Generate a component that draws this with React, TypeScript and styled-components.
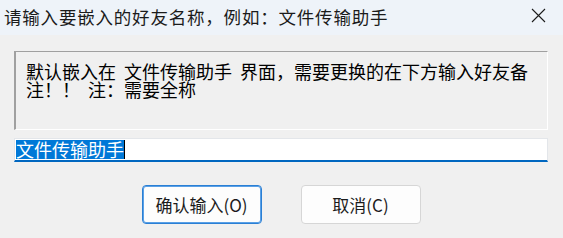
import styled, { createGlobalStyle } from "styled-components";

const GlobalStyle = createGlobalStyle`
  html, body {
    margin: 0;
    padding: 0;
    background: #f0f0f0;
  }
  body {
    font-family: "Noto Sans CJK SC", "Noto Sans", sans-serif;
  }
`;

const Window = styled.div`
  width: 563px;
  height: 238px;
  display: flex;
  flex-direction: column;
  background: #f0f0f0;
  overflow: hidden;
`;

const TitleBar = styled.div`
  height: 35px;
  flex: 0 0 35px;
  display: flex;
  align-items: center;
  justify-content: space-between;
  padding: 0 17px 0 4px;
  background: #eef3f9;
  color: #1b1b1b;
  font-size: 17.5px;
`;

const Title = styled.span`
  line-height: 1;
  padding-bottom: 2px;
  white-space: nowrap;
  letter-spacing: 0.8px;
`;

const CloseButton = styled.span`
  display: flex;
  align-items: center;
  width: 15px;
  height: 15px;
  margin-bottom: 4px;
`;

const Body = styled.div`
  display: flex;
  flex-direction: column;
  padding: 16px 15px 0 14px;
`;

const Prompt = styled.div`
  height: 79px;
  box-sizing: border-box;
  padding: 10px 12px 0 10px;
  border-top: 1px solid #a0a0a0;
  border-left: 2px solid #a0a0a0;
  border-right: 1px solid #ffffff;
  border-bottom: 1px solid #ffffff;
  font-size: 18px;
  line-height: 18px;
  word-spacing: 4px;
  color: #000;
`;

const Edit = styled.div`
  margin-top: 8px;
  height: 24px;
  box-sizing: border-box;
  display: flex;
  align-items: center;
  padding-left: 1px;
  background: #fff;
  border: 1px solid #e3e6ea;
  border-bottom: 2px solid #0067c0;
  font-size: 18px;
  line-height: 19px;
`;

const Selected = styled.span`
  background: #0078d7;
  color: #fff;
`;

const Caret = styled.span`
  display: inline-block;
  width: 1px;
  height: 19px;
  background: #000;
`;

const ButtonRow = styled.div`
  margin-top: 23px;
  display: flex;
  justify-content: center;
  gap: 39px;
`;

const Button = styled.button<{ $default?: boolean }>`
  width: 120px;
  height: 39px;
  box-sizing: border-box;
  background: #fdfdfd;
  border: 1px solid ${(p) => (p.$default ? "#2a7fd4" : "#d6d6d6")};
  box-shadow: ${(p) => (p.$default ? "inset 0 0 0 1px #5aa0e6" : "none")};
  border-radius: 4px;
  font-family: "Noto Sans CJK SC", "Noto Sans", sans-serif;
  font-size: 17px;
  color: #1b1b1b;
  padding: 0;
  cursor: default;
`;

export default function App() {
  return (
    <>
      <GlobalStyle />
      <Window>
        <TitleBar>
          <Title>请输入要嵌入的好友名称，例如：文件传输助手</Title>
          <CloseButton>
            <svg width="15" height="15" viewBox="0 0 15 15">
              <path d="M1 1 L14 14 M14 1 L1 14" stroke="#1b1b1b" strokeWidth="1.1" fill="none" />
            </svg>
          </CloseButton>
        </TitleBar>
        <Body>
          <Prompt>默认嵌入在 文件传输助手 界面，需要更换的在下方输入好友备注！！ 注：需要全称</Prompt>
          <Edit>
            <Selected>文件传输助手</Selected>
            <Caret />
          </Edit>
          <ButtonRow>
            <Button $default>确认输入(O)</Button>
            <Button>取消(C)</Button>
          </ButtonRow>
        </Body>
      </Window>
    </>
  );
}
